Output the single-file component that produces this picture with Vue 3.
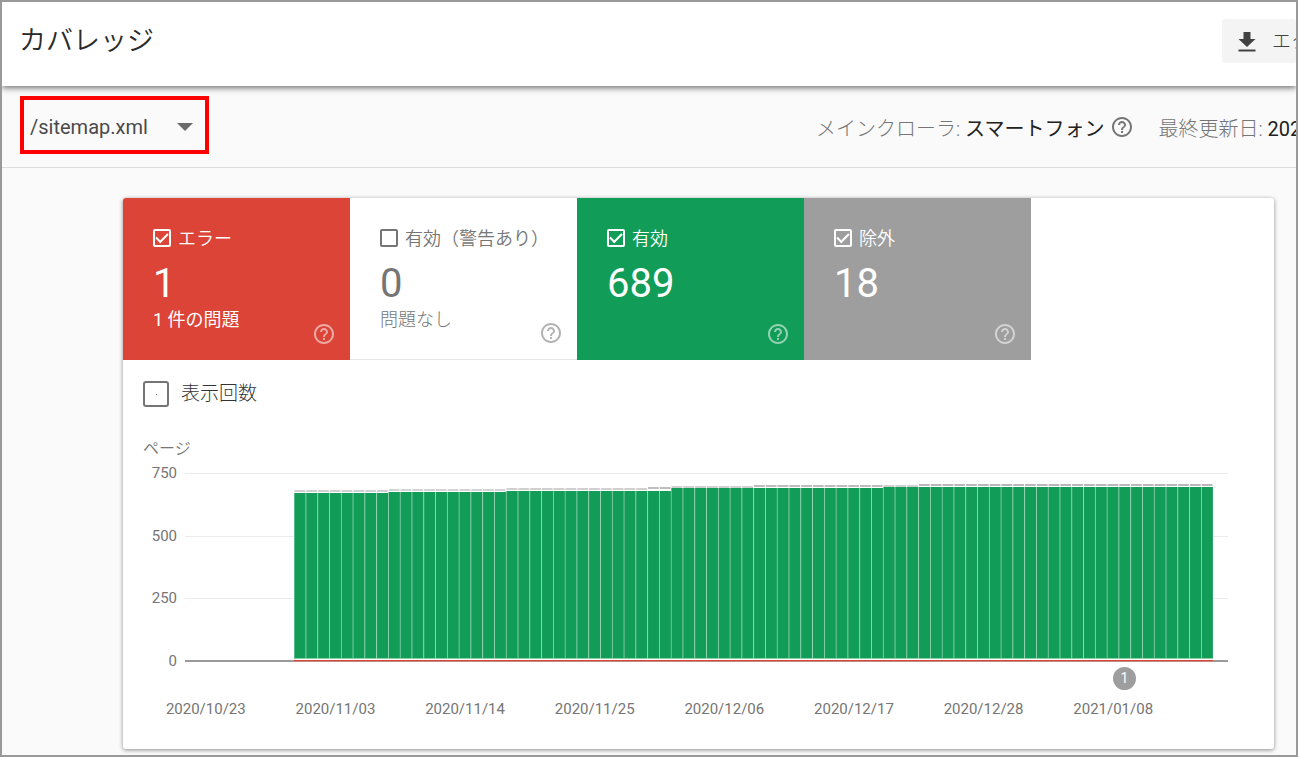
<script setup>
import { ref } from 'vue'

const source = ref('/sitemap.xml')

const tiles = ref([
  { id: 'error', label: 'エラー', count: '1', note: '1 件の問題', on: true },
  { id: 'warning', label: '有効（警告あり）', count: '0', note: '問題なし', on: false },
  { id: 'valid', label: '有効', count: '689', note: '', on: true },
  { id: 'excluded', label: '除外', count: '18', note: '', on: true }
])
const impressions = ref(false)

const dates = [
  '2020/10/23', '2020/11/03', '2020/11/14', '2020/11/25',
  '2020/12/06', '2020/12/17', '2020/12/28', '2021/01/08'
]
const scale = [750, 500, 250, 0]

// Runs of consecutive days that share the same totals
const runs = [
  { days: 8, top: 30, cap: 27, tone: '#d0d0d0' },
  { days: 10, top: 29, cap: 26, tone: '#d4d4d4' },
  { days: 12, top: 28, cap: 25, tone: '#d0d0d0' },
  { days: 2, top: 28, cap: 24, tone: '#bdbdbd' },
  { days: 7, top: 25, cap: 23, tone: '#d0d0d0' },
  { days: 11, top: 25, cap: 22, tone: '#bdbdbd' },
  { days: 3, top: 24, cap: 22, tone: '#d0d0d0' },
  { days: 25, top: 24, cap: 21, tone: '#b8b8b8' }
]
const chartStart = 109
const step = 919 / 78
const bars = runs
  .flatMap((run) => Array.from({ length: run.days }, () => run))
  .map((run, i) => ({ ...run, x: chartStart + i * step }))
</script>

<template>
  <div class="page">
    <header class="header">
      <h1>カバレッジ</h1>
      <button class="export" type="button">
        <svg viewBox="0 0 18 20" aria-hidden="true">
          <path d="M5.5 0.5h7v7h5L9 15.5 0.5 7.500h5zM0.500 18h17v2h-17z" fill="currentColor" />
        </svg>
        <span>エクスポート</span>
      </button>
    </header>

    <div class="toolbar">
      <div class="picker">
        <select v-model="source" aria-label="サイトマップ">
          <option>/sitemap.xml</option>
        </select>
        <i class="arrow"></i>
      </div>
      <div class="facts">
        <span>メインクローラ: <b>スマートフォン</b></span>
        <button class="help" type="button" aria-label="ヘルプ">
          <svg viewBox="0 0 24 24"><path d="M11 18h2v-2h-2v2zm1-16C6.480 2 2 6.480 2 12s4.480 10 10 10 10-4.480 10-10S17.520 2 12 2zm0 18c-4.410 0-8-3.590-8-8s3.590-8 8-8 8 3.590 8 8-3.590 8-8 8zm0-14c-2.210 0-4 1.790-4 4h2c0-1.100.9-2 2-2s2 .9 2 2c0 2-3 1.750-3 5h2c0-2.250 3-2.500 3-5 0-2.210-1.790-4-4-4z" fill="currentColor" /></svg>
        </button>
        <span class="updated">最終更新日: <b>2021</b></span>
      </div>
    </div>

    <main class="content">
      <section class="card">
        <div class="tiles">
          <div v-for="tile in tiles" :key="tile.id" class="tile" :class="tile.id">
            <label>
              <input v-model="tile.on" type="checkbox" class="check" />
              <span>{{ tile.label }}</span>
            </label>
            <div class="count">{{ tile.count }}</div>
            <div class="note">{{ tile.note }}</div>
            <button class="help" type="button" :aria-label="tile.label + 'のヘルプ'">
              <svg viewBox="0 0 24 24"><path d="M11 18h2v-2h-2v2zm1-16C6.480 2 2 6.480 2 12s4.480 10 10 10 10-4.480 10-10S17.520 2 12 2zm0 18c-4.410 0-8-3.590-8-8s3.590-8 8-8 8 3.590 8 8-3.590 8-8 8zm0-14c-2.210 0-4 1.790-4 4h2c0-1.100.9-2 2-2s2 .9 2 2c0 2-3 1.750-3 5h2c0-2.250 3-2.500 3-5 0-2.210-1.790-4-4-4z" fill="currentColor" /></svg>
            </button>
          </div>
        </div>

        <label class="impressions">
          <input v-model="impressions" type="checkbox" />
          <span>表示回数</span>
        </label>

        <div class="axis-title">ページ</div>
        <div class="chart">
          <div class="scale">
            <span v-for="n in scale" :key="n">{{ n }}</span>
          </div>
          <svg class="plot" viewBox="0 0 1043 208" preserveAspectRatio="none" role="img" aria-label="ページ数の推移">
            <g fill="#ebebeb">
              <rect x="0" y="10" width="1043" height="1" />
              <rect x="0" y="73" width="1043" height="1" />
              <rect x="0" y="135" width="1043" height="1" />
            </g>
            <rect x="0" y="197" width="1043" height="2" fill="#9a9a9a" />
            <rect :x="chartStart" y="29" width="919" height="167" fill="#fff" />
            <g v-for="bar in bars" :key="bar.x">
              <rect :x="bar.x + 0.5" :y="bar.cap" :width="step - 1" height="2" :fill="bar.tone" />
              <rect :x="bar.x" :y="bar.top" :width="step" :height="196 - bar.top" fill="#8bceab" />
              <rect :x="bar.x + 0.6" :y="bar.top" :width="step - 0.8" :height="195 - bar.top" fill="#119d58" />
            </g>
            <rect :x="chartStart" y="197" width="919" height="1" fill="#db4437" />
            <rect :x="chartStart" y="198" width="919" height="1" fill="#c08a84" />
          </svg>
        </div>
        <div class="marker"><span>1</span></div>
        <div class="dates">
          <span v-for="d in dates" :key="d">{{ d }}</span>
        </div>
      </section>
    </main>
  </div>
</template>

<style>
body {
  margin: 0;
}
</style>

<style scoped>
* {
  box-sizing: border-box;
}

.page {
  display: flex;
  flex-direction: column;
  min-height: 100vh;
  overflow: hidden;
  border: 2px solid #999;
  background: #fafafa;
  color: #757575;
  font-family: Roboto, "Noto Sans CJK JP", sans-serif;
  font-size: 20px;
}

button {
  border: 0;
  padding: 0;
  background: none;
  color: inherit;
  font: inherit;
}

.header {
  position: relative;
  display: flex;
  align-items: flex-start;
  justify-content: space-between;
  height: 84px;
  padding: 17px 0 0 17px;
  background: #fff;
  box-shadow: 0 2px 6px rgba(0, 0, 0, 0.55);
}

h1 {
  margin: 0;
  color: #2a2a2a;
  font-size: 27px;
  font-weight: 350;
  line-height: 44px;
}

.export {
  display: flex;
  flex: 0 0 74px;
  align-items: center;
  gap: 16px;
  height: 44px;
  padding-left: 16px;
  overflow: hidden;
  border-radius: 3px;
  background: #f4f4f4;
  color: #424242;
  font-size: 19px;
  font-weight: 300;
  white-space: nowrap;
}

.export svg {
  flex: none;
  width: 18px;
  height: 21px;
}

.export span {
  padding-bottom: 4px;
}

.toolbar {
  display: flex;
  align-items: flex-start;
  justify-content: space-between;
  height: 82px;
  padding: 10px 0 0 18px;
  border-bottom: 1px solid #dcdcdc;
}

.picker {
  display: flex;
  align-items: center;
  width: 189px;
  height: 58px;
  border: 4px solid #f00;
  padding: 3px 12px 0 0;
}

select {
  flex: 1;
  min-width: 0;
  height: 100%;
  appearance: none;
  border: 0;
  padding: 0 0 0 6px;
  background: transparent;
  color: #4a4a4a;
  font: inherit;
}

.arrow {
  border: 8px solid transparent;
  border-top-color: #6b6b6b;
  border-bottom: 0;
}

.facts {
  display: flex;
  flex: none;
  align-items: center;
  width: 480px;
  height: 62px;
  overflow: hidden;
  font-weight: 300;
  white-space: nowrap;
}

.facts b {
  color: #212121;
  font-weight: 400;
}

.updated {
  margin-left: 24px;
}

.help,
.help svg {
  display: block;
  width: 24px;
  height: 24px;
}

.facts .help {
  flex: none;
  margin-left: 6px;
}

.content {
  padding: 30px 22px 6px 121px;
}

.card {
  overflow: hidden;
  padding-bottom: 30px;
  border-radius: 3px;
  background: #fff;
  box-shadow: 0 1px 4px rgba(0, 0, 0, 0.45);
}

.tiles {
  display: flex;
}

.tile {
  position: relative;
  flex: 0 0 227px;
  height: 162px;
  padding: 28px 0 0 30px;
  color: #fff;
  font-size: 18px;
}

.tile label {
  display: flex;
  align-items: center;
  gap: 7px;
  height: 24px;
  font-weight: 350;
  white-space: nowrap;
}

.tile label span {
  padding-bottom: 2px;
}

.error {
  background: #db4437;
}

.warning {
  border-bottom: 1px solid #e6e6e6;
  color: #757575;
}

.valid {
  background: #119d58;
}

.excluded {
  background: #9e9e9e;
}

.check {
  display: grid;
  place-items: center;
  width: 18px;
  height: 18px;
  margin: 0;
  appearance: none;
  border: 2px solid currentColor;
  border-radius: 2px;
  color: inherit;
}

.check:checked::after {
  width: 10px;
  height: 5px;
  margin-bottom: 3px;
  border: solid currentColor;
  border-width: 0 0 2px 2px;
  content: "";
  rotate: -45deg;
}

.count {
  margin-top: 10px;
  font-size: 40px;
  line-height: 48px;
}

.note {
  line-height: 24px;
}

.warning .note {
  font-weight: 300;
}

.tile .help {
  position: absolute;
  right: 14px;
  bottom: 14px;
  opacity: 0.55;
}

.impressions {
  display: flex;
  align-items: center;
  gap: 12px;
  height: 28px;
  margin: 20px 0 0 20px;
  color: #333;
  font-size: 19px;
  font-weight: 300;
}

.impressions span {
  padding-bottom: 6px;
}

.impressions input {
  display: grid;
  place-items: center;
  width: 26px;
  height: 26px;
  margin: 0;
  appearance: none;
  border: 2px solid #757575;
  border-radius: 3px;
}

.impressions input::after {
  width: 1px;
  height: 1px;
  background: #888;
  content: "";
}

.axis-title {
  margin: 29px 0 0 20px;
  font-size: 16px;
  font-weight: 350;
  line-height: 24px;
}

.chart {
  display: flex;
  gap: 8px;
  height: 208px;
  margin: 2px 46px 0 20px;
}

.scale {
  display: flex;
  flex: 0 0 34px;
  flex-direction: column;
  justify-content: space-between;
  font-size: 15px;
  line-height: 20px;
  text-align: right;
}

.plot {
  flex: 1;
  min-width: 0;
  height: 100%;
}

.marker {
  display: flex;
  justify-content: flex-end;
  margin: -4px 138px 0 0;
}

.marker span {
  width: 23px;
  height: 23px;
  border-radius: 50%;
  background: #9e9e9e;
  color: #fff;
  font-size: 14px;
  line-height: 23px;
  text-align: center;
}

.dates {
  display: grid;
  grid-template-columns: repeat(8, 1fr);
  margin: 9px 96px 0 18px;
  font-size: 15px;
  line-height: 20px;
  text-align: center;
}
</style>
